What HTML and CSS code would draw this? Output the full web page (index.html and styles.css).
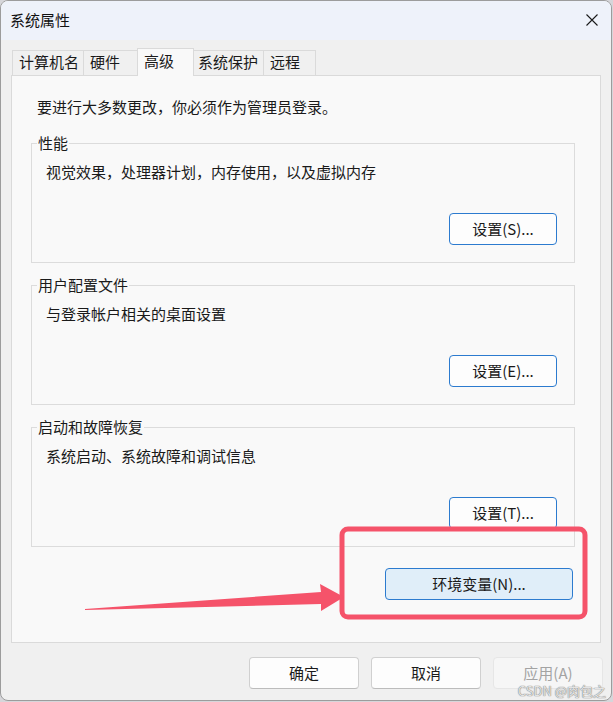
FILE: index.html
```html
<!DOCTYPE html>
<html lang="zh-CN">
<head>
<meta charset="utf-8">
<title>系统属性</title>
<link rel="stylesheet" href="styles.css">
</head>
<body>
<div class="window">
  <div class="titlebar">
    <span class="title">系统属性</span>
    <span class="close">
      <svg width="12" height="12" viewBox="0 0 12 12"><path d="M0.5 0.5 L11.5 11.5 M11.5 0.5 L0.5 11.5" stroke="#1a1a1a" stroke-width="1.1" fill="none"/></svg>
    </span>
  </div>
  <div class="content">
    <div class="tabs">
      <div class="tab w1">计算机名</div>
      <div class="tab w2">硬件</div>
      <div class="tab w3 active">高级</div>
      <div class="tab w4">系统保护</div>
      <div class="tab w5">远程</div>
    </div>
    <div class="panel">
      <div class="intro">要进行大多数更改，你必须作为管理员登录。</div>
      <div class="group first">
        <span class="group-title">性能</span>
        <div class="group-text">视觉效果，处理器计划，内存使用，以及虚拟内存</div>
        <button class="btn blue">设置(S)...</button>
      </div>
      <div class="group">
        <span class="group-title">用户配置文件</span>
        <div class="group-text">与登录帐户相关的桌面设置</div>
        <button class="btn blue">设置(E)...</button>
      </div>
      <div class="group">
        <span class="group-title">启动和故障恢复</span>
        <div class="group-text">系统启动、系统故障和调试信息</div>
        <button class="btn blue">设置(T)...</button>
      </div>
      <button class="btn env">环境变量(N)...</button>
    </div>
    <div class="footer">
      <button class="btn wide">确定</button>
      <button class="btn wide">取消</button>
      <button class="btn wide disabled">应用(A)</button>
    </div>
  </div>
  <svg class="annot" width="612" height="701" viewBox="0 0 612 701">
    <rect x="342" y="529" width="243" height="88" rx="6" ry="6" fill="none" stroke="#f5536a" stroke-width="5"/>
    <polygon points="85,609 321,592 320,584 344,597 321,611 321,604 85,610" fill="#f5536a"/>
  </svg>
  <span class="watermark">CSDN @肉包之</span>
</div>
</body>
</html>
```
FILE: styles.css
```css
* { box-sizing: border-box; }
html, body { margin: 0; padding: 0; }
body {
  background: #d6d6da;
  width: 613px;
  height: 702px;
  font-family: "Noto Sans CJK SC", "Noto Sans", sans-serif;
  font-size: 15px;
  color: #1a1a1a;
}
.window {
  position: relative;
  width: 612px;
  height: 701px;
  border: 1px solid #9c9c9c;
  border-radius: 8px;
  overflow: hidden;
  display: flex;
  flex-direction: column;
  background: #f0f0f0;
}
.titlebar {
  height: 39px;
  flex: none;
  background: #eef2fa;
  display: flex;
  align-items: center;
  justify-content: space-between;
  padding-left: 9px;
  padding-right: 13px;
  padding-bottom: 2px;
}
.title { font-size: 15px; line-height: 20px; color: #111; }
.close { display: flex; width: 12px; height: 12px; }
.content {
  flex: 1;
  display: flex;
  flex-direction: column;
  padding: 8px 10px 0 10px;
}
.tabs {
  height: 27px;
  display: flex;
  align-items: flex-end;
  padding-left: 1px;
  position: relative;
  z-index: 2;
}
.tab {
  height: 25px;
  border: 1px solid #dadada;
  border-bottom: none;
  background: #f0f0f0;
  padding-left: 6px;
  line-height: 22px;
  font-size: 15px;
  margin-right: -1px;
}
.tab.active {
  height: 28px;
  margin-bottom: -1px;
  background: #f9f9f9;
  line-height: 24px;
  position: relative;
  z-index: 3;
}
.w1 { width: 72px; }
.w2 { width: 55px; }
.w3 { width: 57px; }
.w4 { width: 71px; padding-left: 4px; }
.w5 { width: 53px; }
.panel {
  width: 590px;
  height: 568px;
  background: #f9f9f9;
  border: 1px solid #dadada;
  padding: 21px 24px 0 19px;
  display: flex;
  flex-direction: column;
}
.intro { line-height: 20px; height: 20px; margin-left: 6px; }
.group {
  position: relative;
  width: 544px;
  height: 120px;
  border: 1px solid #dcdcdc;
  padding: 18px 17px 17px 14px;
  margin-top: 22px;
  display: flex;
  flex-direction: column;
}
.group.first { margin-top: 26px; }
.group-title {
  position: absolute;
  top: -11px;
  left: 5px;
  padding: 0 1px;
  background: #f9f9f9;
  line-height: 20px;
}
.group-text { line-height: 20px; height: 20px; }
.btn {
  font-family: "Noto Sans CJK SC", "Noto Sans", sans-serif;
  font-size: 15px;
  color: #1a1a1a;
  background: #fdfdfd;
  border: 1px solid #d0d0d0;
  border-bottom-color: #bcbcbc;
  border-radius: 4px;
  height: 32px;
  padding: 0;
  line-height: 20px;
}
.group .btn {
  align-self: flex-end;
  margin-top: 31px;
  width: 108px;
}
.btn.blue { border: 1px solid #2c7bcf; }
.btn.env {
  align-self: flex-end;
  width: 188px;
  margin-top: 21px;
  margin-right: 3px;
  background: #e0eef9;
  border: 1px solid #2c7bcf;
}
.footer {
  display: flex;
  justify-content: flex-end;
  gap: 12px;
  margin-top: 14px;
  margin-right: -2px;
}
.btn.wide { width: 110px; }
.btn.disabled {
  color: #a3a3a3;
  background: #f6f6f6;
  border: 1px solid #e6e6e6;
}
.annot {
  position: absolute;
  left: -1px;
  top: -1px;
  pointer-events: none;
}
.watermark {
  position: absolute;
  right: 5px;
  bottom: 1px;
  font-size: 13px;
  line-height: 16px;
  color: #e4e4e4;
  text-shadow: 0 0 1px #7a7a7a, 0 0 1px #7a7a7a;
}
```
